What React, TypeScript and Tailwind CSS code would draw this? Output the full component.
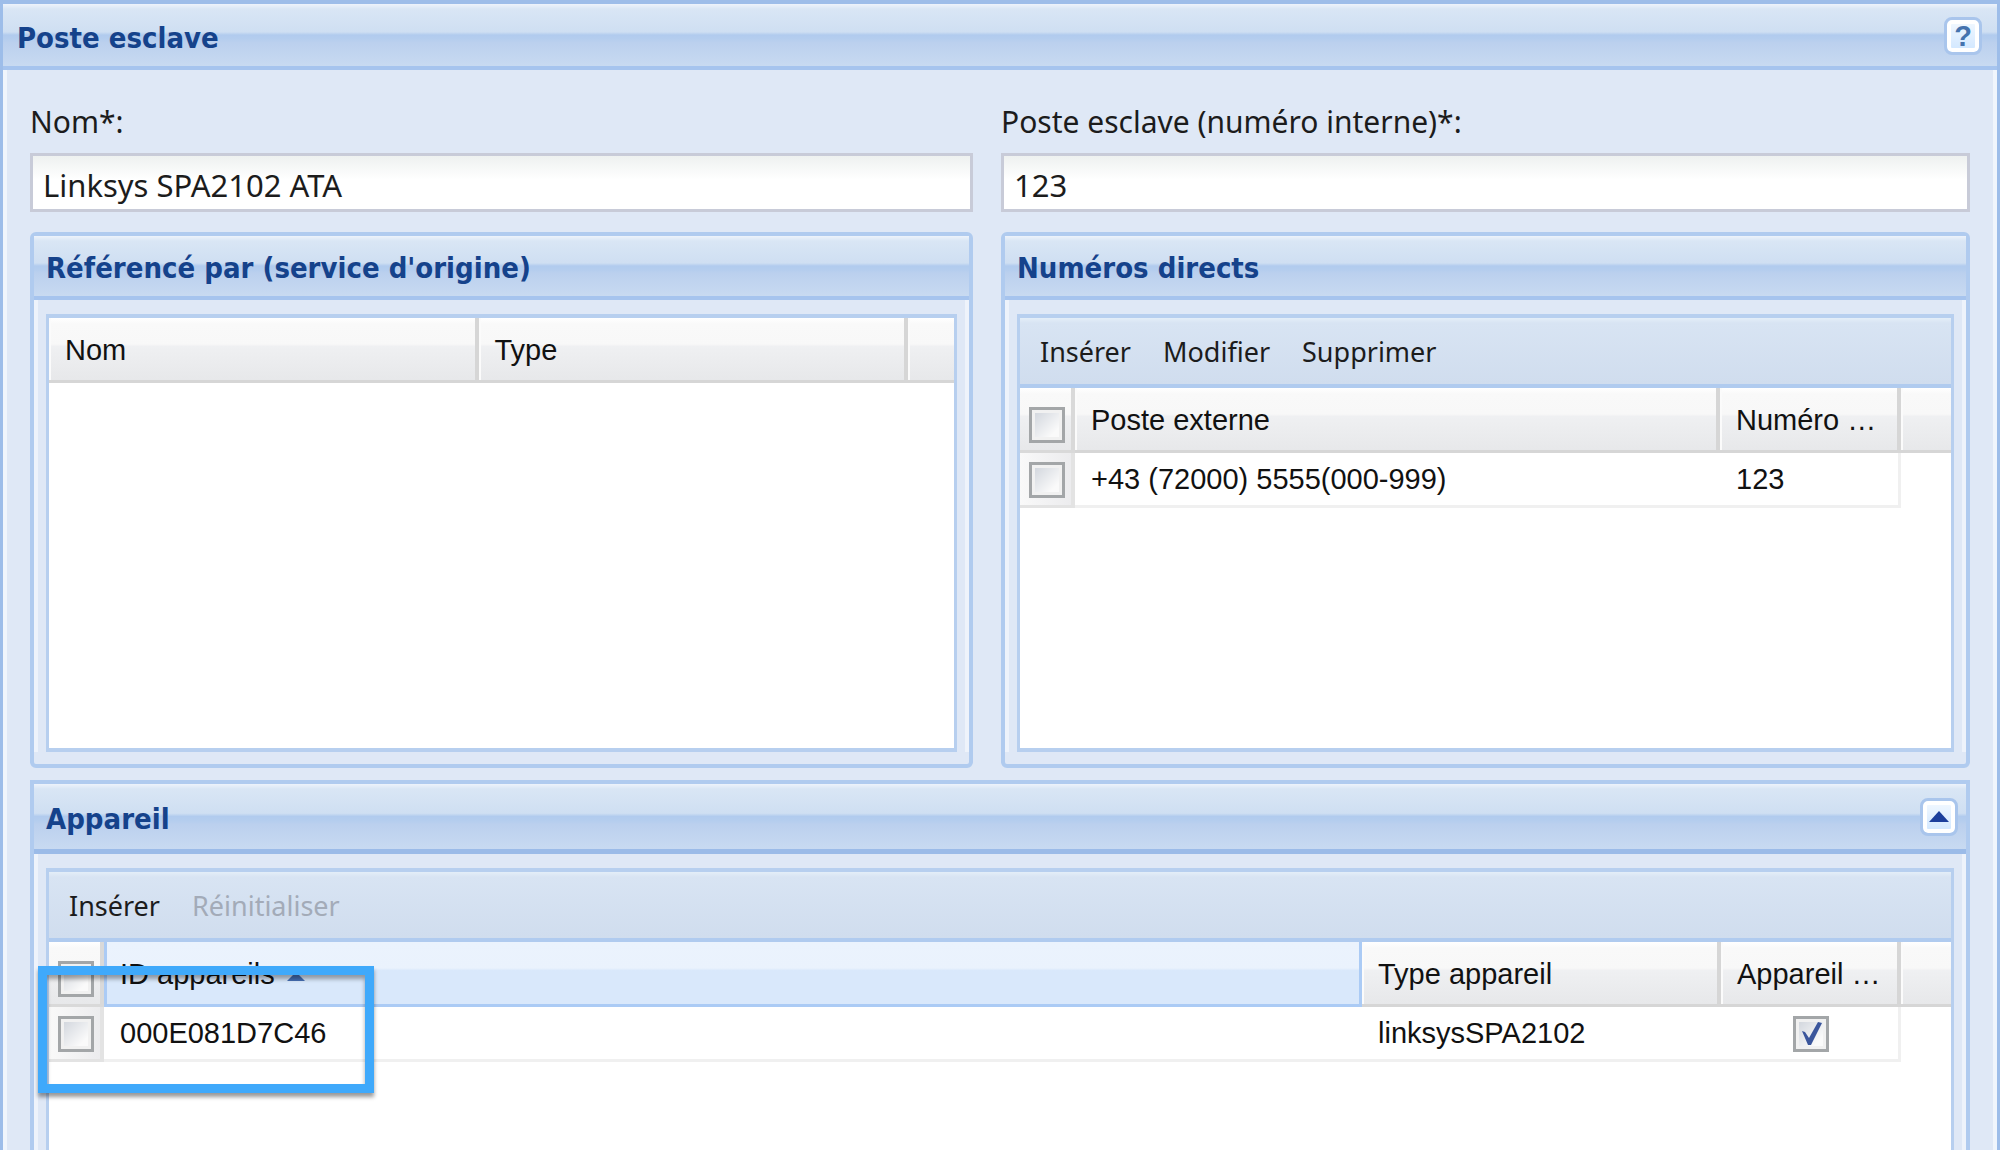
import type { ReactNode } from "react";
import { useState } from "react";

const TITLE = "pt-1 font-['DejaVu_Sans_Condensed','DejaVu_Sans',sans-serif] text-[29px] leading-8 font-bold text-[#15428b]";
const UI = "font-['Noto_Sans',sans-serif] leading-8";

const HEAD_BG =
    "bg-[linear-gradient(to_bottom,#edf3fb_0,#d9e6f5_5px,#cfdff2_45%,#b1cbee_50%,#b4cdee_56%,#bbd0ee_62%,#c8daf1_100%)]";
const TOOLBAR_BG = "bg-[linear-gradient(to_bottom,#e4eef8_0,#d8e4f3_5px,#d0ddee_100%)]";
const TH_BG = "bg-[linear-gradient(to_bottom,#ffffff_0,#f9f9f9_6px,#f8f8f8_42%,#eff0f2_46%,#e7e8ea_100%)]";

interface PanelProps {
    title: string;
    tool?: ReactNode;
    className?: string;
    headClass?: string;
    innerClass?: string;
    overlay?: ReactNode;
    children: ReactNode;
}

function Panel({ title, tool, className, headClass, innerClass, overlay, children }: PanelProps) {
    return (
        <section className={`relative flex flex-col border-x-4 border-[#b0cbef] ${className}`}>
            <header className={`flex items-center justify-between pl-3 pr-2 ${HEAD_BG} ${headClass}`}>
                <h2 className={TITLE}>{title}</h2>
                {tool}
            </header>
            <div className="flex flex-1 flex-col border-x-4 border-[#eef3fb] px-2 pt-3.5">
                <div className={`flex-1 border-x-3 border-y-4 border-[#b7cfef] bg-white ${innerClass}`}>{children}</div>
            </div>
            {overlay}
        </section>
    );
}

function Toolbar({ children }: { children: ReactNode }) {
    return (
        <div className={`flex h-[70px] items-center gap-8 border-b-4 border-[#b0cbef] pt-0.5 pl-5 ${TOOLBAR_BG}`}>
            {children}
        </div>
    );
}

function ToolButton({ label, disabled }: { label: string; disabled?: boolean }) {
    return (
        <button type="button" disabled={disabled} className={`${UI} text-[27px] text-[#1c1c1c] disabled:text-[#a3abb8]`}>
            {label}
        </button>
    );
}

function Check({ label, defaultChecked }: { label: string; defaultChecked?: boolean }) {
    const [checked, setChecked] = useState(!!defaultChecked);
    return (
        <span className="relative inline-block h-9 w-9 align-middle">
            <input
                type="checkbox"
                aria-label={label}
                checked={checked}
                onChange={() => setChecked(!checked)}
                className="block h-9 w-9 appearance-none border-3 border-[#a3a6a8] bg-[linear-gradient(135deg,#cdd2da,#fafafa_75%)] shadow-[inset_0_0_0_3px_#f1f1f1]"
            />
            {checked && (
                <svg viewBox="0 0 36 36" className="pointer-events-none absolute inset-0 h-9 w-9">
                    <path d="M9 15 L12 16 L16 22 L25 6 L29 7 L18 29 L15 29 Z" fill="#3b569c" />
                </svg>
            )}
        </span>
    );
}

function Th({ children }: { children?: ReactNode }) {
    return (
        <th
            scope="col"
            className={`h-[65px] truncate border-r-4 border-b-3 border-[#d6d6d6] pt-0.5 pl-4 text-left font-normal shadow-[inset_2px_0_0_#fbfbfb] last:border-r-0 ${TH_BG}`}
        >
            {children}
        </th>
    );
}

function CheckTh({ label }: { label: string }) {
    return (
        <th scope="col" className={`h-[65px] border-r-4 border-b-3 border-[#d9d9d9] pt-3 pl-0.5 text-center ${TH_BG}`}>
            <Check label={label} />
        </th>
    );
}

function CheckTd({ label }: { label: string }) {
    return (
        <td className="h-[55px] border-r-4 border-b-3 border-[#e3e3e3] bg-[linear-gradient(to_right,#f9f9f9,#ececee)] pt-0.5 pl-0.5 text-center">
            <Check label={label} />
        </td>
    );
}

const TD = "h-[55px] border-b-3 border-[#f0f0f0] pl-4";
const TABLE = "w-full table-fixed border-separate border-spacing-0 font-['Liberation_Sans',Arial,sans-serif] text-[29px] leading-8 text-[#111]";

function Field({ id, label, value }: { id: string; label: string; value: string }) {
    return (
        <div className="flex flex-col">
            <label htmlFor={id} className={`${UI} pb-[15px] text-[30px] text-[#1c1c1c]`}>
                {label}
            </label>
            <input
                id={id}
                type="text"
                defaultValue={value}
                className={`${UI} h-[59px] w-full border-3 border-[#c8cbd8] bg-[linear-gradient(to_bottom,#eef1f0_0,#ffffff_45%)] pt-1 pl-2.5 text-[31px] text-[#1c1c1c]`}
            />
        </div>
    );
}

const SQUARE =
    "flex h-[38px] w-[38px] items-center justify-center rounded-lg border-3 border-[#a9c5ec] bg-[linear-gradient(to_bottom,#f3f9ff,#cfe6ff)] shadow-[inset_0_0_0_4px_#ffffff]";

export default function App() {
    return (
        <main className="flex min-h-screen flex-col border-x-3 border-t-4 border-[#9dbde9] bg-[#dfe8f6]">
            <header className={`flex h-[66px] items-center justify-between border-b-4 border-[#a6c4ee] pt-0.5 pr-[15px] pl-3.5 ${HEAD_BG}`}>
                <h1 className={TITLE}>Poste esclave</h1>
                <button type="button" aria-label="Aide" className={SQUARE}>
                    <span className="font-['Liberation_Sans',Arial,sans-serif] text-[29px] leading-8 font-bold text-[#4573ae]">?</span>
                </button>
            </header>

            <div className="flex flex-1 flex-col border-x-4 border-[#f0f5fc] px-[23px]">
                <div className="grid grid-cols-[943fr_969fr] gap-x-7 gap-y-5 pt-9">
                    <Field id="nom" label="Nom*:" value="Linksys SPA2102 ATA" />
                    <Field id="poste" label="Poste esclave (numéro interne)*:" value="123" />

                    <Panel
                        title="Référencé par (service d'origine)"
                        className="h-[536px] rounded-md border-y-4 pb-3"
                        headClass="h-16 border-b-4 border-[#a6c4ee]"
                    >
                        <table className={TABLE}>
                            <colgroup>
                                <col />
                                <col />
                                <col className="w-[46px]" />
                            </colgroup>
                            <thead>
                                <tr>
                                    <Th>Nom</Th>
                                    <Th>Type</Th>
                                    <Th />
                                </tr>
                            </thead>
                        </table>
                    </Panel>

                    <Panel
                        title="Numéros directs"
                        className="h-[536px] rounded-md border-y-4 pb-3"
                        headClass="h-16 border-b-4 border-[#a6c4ee]"
                    >
                        <Toolbar>
                            <ToolButton label="Insérer" />
                            <ToolButton label="Modifier" />
                            <ToolButton label="Supprimer" />
                        </Toolbar>
                        <table className={TABLE}>
                            <colgroup>
                                <col className="w-[55px]" />
                                <col />
                                <col className="w-[181px]" />
                                <col className="w-[50px]" />
                            </colgroup>
                            <thead>
                                <tr>
                                    <CheckTh label="Tout sélectionner" />
                                    <Th>Poste externe</Th>
                                    <Th>Numéro …</Th>
                                    <Th />
                                </tr>
                            </thead>
                            <tbody>
                                <tr>
                                    <CheckTd label="+43 (72000) 5555(000-999)" />
                                    <td className={TD}>+43 (72000) 5555(000-999)</td>
                                    <td className={`${TD} border-r-3`}>123</td>
                                    <td />
                                </tr>
                            </tbody>
                        </table>
                    </Panel>
                </div>

                <div className="flex flex-1 flex-col pt-3">
                    <Panel
                        title="Appareil"
                        className="flex-1 border-t-4"
                        headClass="h-[70px] border-b-5 border-[#9bbbe8]"
                        innerClass="border-b-0"
                        tool={
                            <button type="button" aria-label="Réduire" className={SQUARE}>
                                <svg viewBox="0 0 20 12" className="h-3 w-5">
                                    <path d="M10 0 L20 11 H0 Z" fill="#1c3f9c" />
                                </svg>
                            </button>
                        }
                        overlay={
                            <div className="pointer-events-none absolute top-[182px] left-1 h-[127px] w-[336px] border-9 border-[#3fa9fb] shadow-[0_4px_4px_rgba(0,0,0,0.4),inset_0_4px_4px_rgba(0,0,0,0.35)]" />
                        }
                    >
                        <Toolbar>
                            <ToolButton label="Insérer" />
                            <ToolButton label="Réinitialiser" disabled />
                        </Toolbar>
                        <table className={TABLE}>
                            <colgroup>
                                <col className="w-[55px]" />
                                <col />
                                <col className="w-[359px]" />
                                <col className="w-[180px]" />
                                <col className="w-[50px]" />
                            </colgroup>
                            <thead>
                                <tr>
                                    <CheckTh label="Tout sélectionner" />
                                    <th
                                        scope="col"
                                        aria-sort="ascending"
                                        className="border-x-3 border-b-3 border-[#abcbf5] bg-[linear-gradient(to_bottom,#ebf3fd_0,#eaf2fd_42%,#d9e8fb_46%,#d9e8fb_100%)] pt-0.5 pl-[13px] text-left font-normal"
                                    >
                                        <span className="flex items-center gap-3">
                                            ID appareils
                                            <svg viewBox="0 0 18 9" className="mt-1 h-[9px] w-[18px]">
                                                <path d="M9 0 L18 9 H0 Z" fill="#456fb5" />
                                            </svg>
                                        </span>
                                    </th>
                                    <Th>Type appareil</Th>
                                    <Th>Appareil …</Th>
                                    <Th />
                                </tr>
                            </thead>
                            <tbody>
                                <tr>
                                    <CheckTd label="000E081D7C46" />
                                    <td className={TD}>000E081D7C46</td>
                                    <td className={TD}>linksysSPA2102</td>
                                    <td className="border-r-3 border-b-3 border-[#f0f0f0] pt-0.5 pl-0.5 text-center">
                                        <Check label="Appareil actif" defaultChecked />
                                    </td>
                                    <td />
                                </tr>
                            </tbody>
                        </table>
                    </Panel>
                </div>
            </div>
        </main>
    );
}
